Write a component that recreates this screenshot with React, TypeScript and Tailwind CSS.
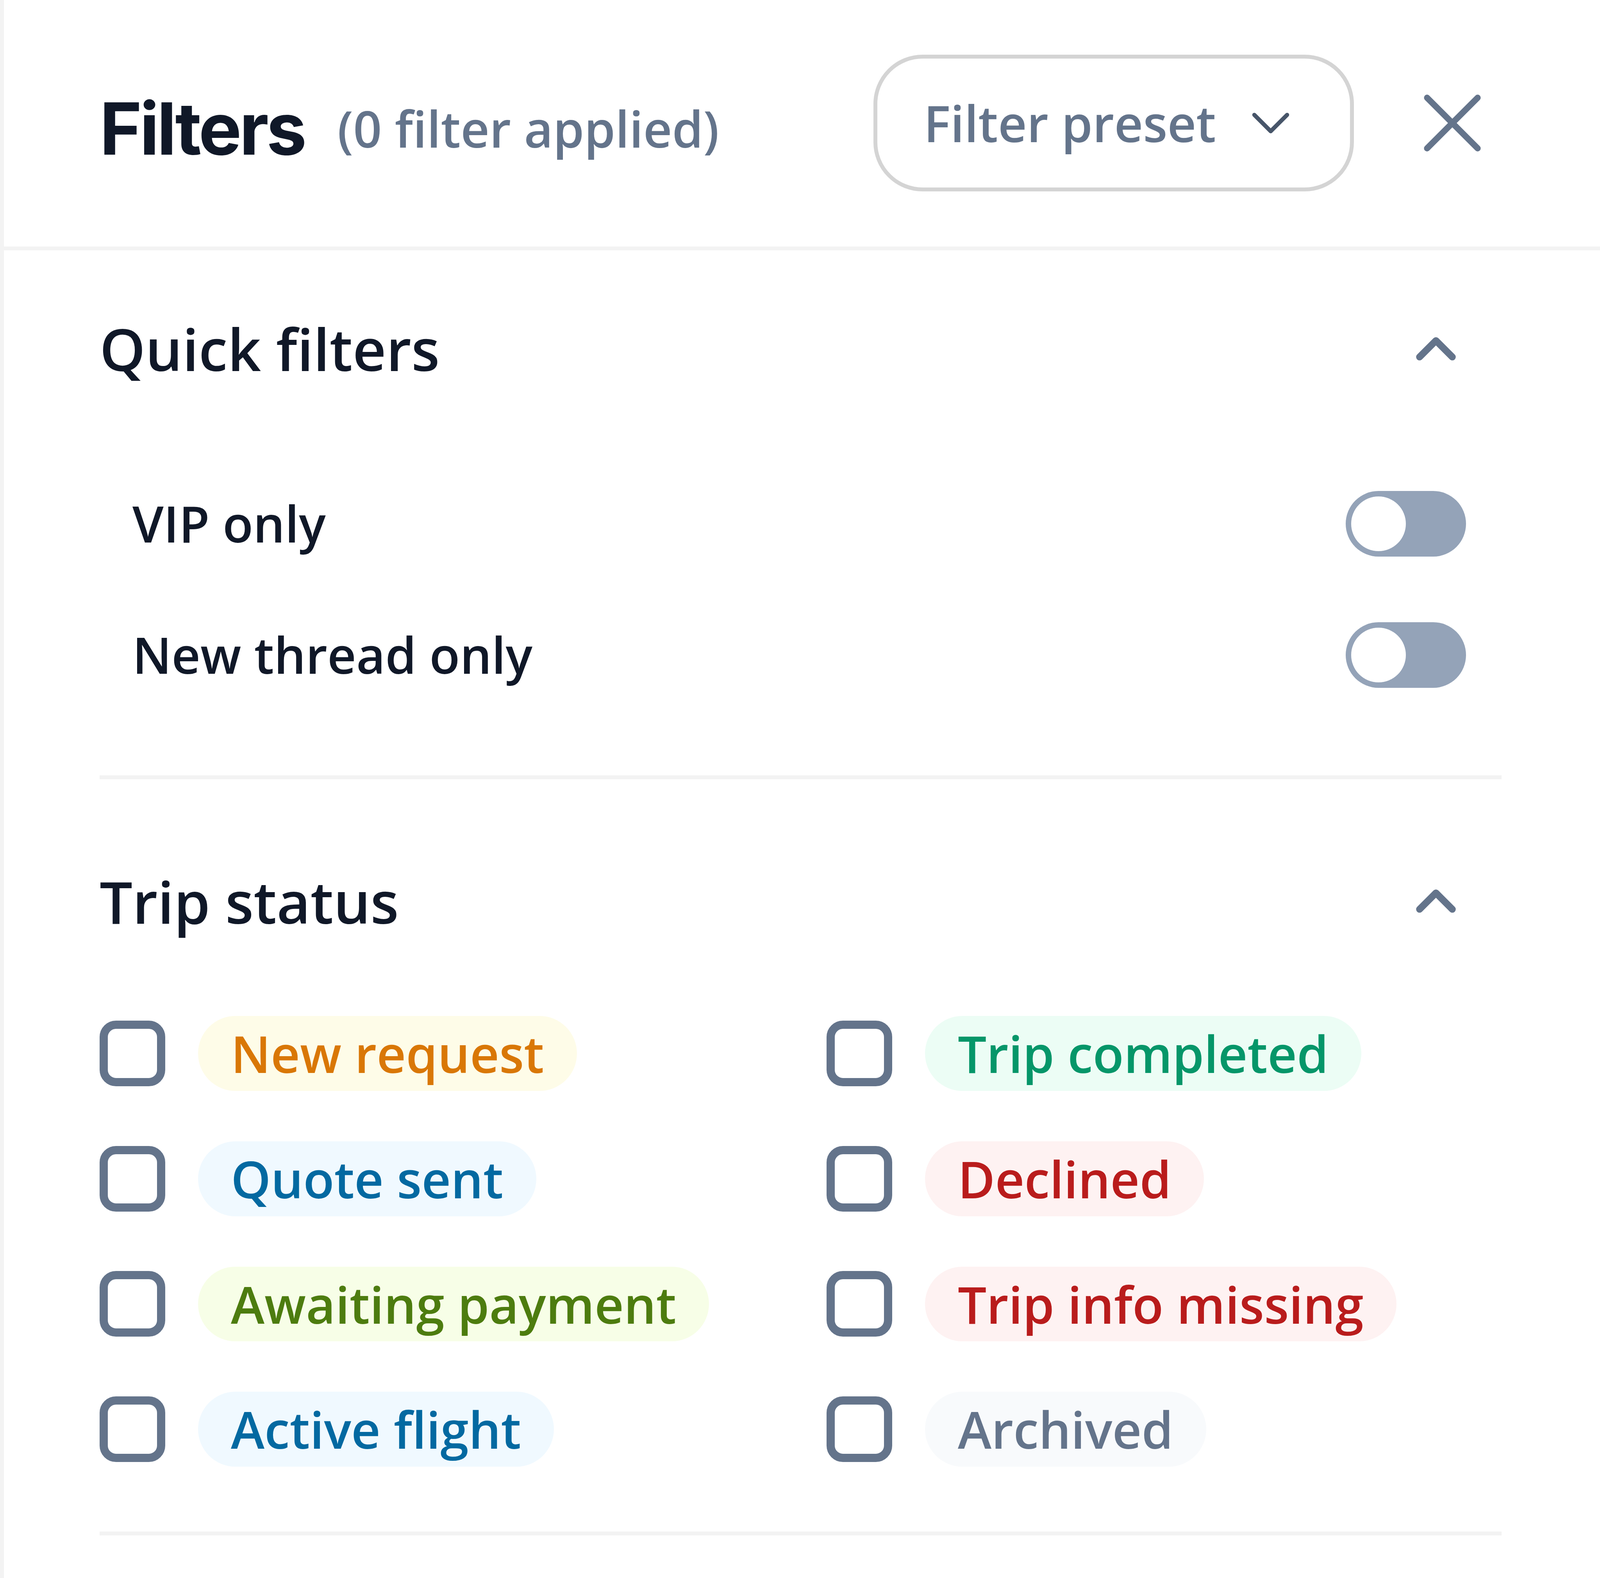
import { ChevronDown, ChevronUp } from "lucide-react";

const statuses = [
  { label: "New request", className: "bg-[#fefce8] text-[#d97706]" },
  { label: "Quote sent", className: "bg-[#f0f9ff] text-[#0369a1]" },
  { label: "Awaiting payment", className: "bg-[#f7fee7] text-[#4d7c0f]" },
  { label: "Active flight", className: "bg-[#f0f9ff] text-[#0369a1]" },
  { label: "Trip completed", className: "bg-[#ecfdf5] text-[#059669]" },
  { label: "Declined", className: "bg-[#fef2f2] text-[#b91c1c]" },
  { label: "Trip info missing", className: "bg-[#fef2f2] text-[#b91c1c]" },
  { label: "Archived", className: "bg-[#f8fafc] text-[#64748b]" },
];

const quickFilters = ["VIP only", "New thread only"];

const Toggle = () => (
  <button className="flex h-6 w-11 items-center rounded-full bg-[#94a3b8] p-0.5">
    <span className="h-5 w-5 rounded-full bg-white" />
  </button>
);

const SectionHeader = ({ title }: { title: string }) => (
  <div className="flex h-12 items-center justify-between">
    <h3 className="text-[21.3px] font-semibold text-[#101828]">{title}</h3>
    <button className="p-3 text-[#64748b]">
      <ChevronUp size={24} strokeWidth={2.5} />
    </button>
  </div>
);

const App = () => {
  return (
    <div className="[zoom:7] border-l-[1.5px] border-[#f3f3f3] bg-white pb-4 font-['Open_Sans',sans-serif]">
      <header className="flex h-[91.5px] items-center justify-between border-b-[1.5px] border-[#f3f3f3] pl-[35px] pr-[42px]">
        <div className="flex items-center gap-3 pt-1">
          <h2 className="font-['Inter',sans-serif] text-[26.4px] font-bold tracking-[-0.032em] text-[#101828]">
            Filters
          </h2>
          <span className="text-[18.3px] font-semibold text-[#64748b]">
            (0 filter applied)
          </span>
        </div>
        <div className="flex items-center gap-6">
          <button className="flex h-[50px] items-center gap-2 rounded-[18px] border-[1.5px] border-[#d4d4d4] px-[17px] text-[18.3px] font-semibold text-[#64748b]">
            Filter preset
            <ChevronDown size={24} strokeWidth={1.5} className="text-[#475569]" />
          </button>
          <button className="text-[#64748b]">
            <svg
              width="24"
              height="24"
              viewBox="0 0 24 24"
              fill="none"
              stroke="currentColor"
              strokeWidth="2.25"
              strokeLinecap="round"
            >
              <path d="M2.75 2.75 21.25 21.25M21.25 2.75 2.75 21.25" />
            </svg>
          </button>
        </div>
      </header>

      <div className="pl-[35px] pr-[36px]">
        <section className="border-b-[1.5px] border-[#f3f3f3] pb-8 pt-3">
          <SectionHeader title="Quick filters" />
          <div className="mt-7 flex flex-col gap-6 pl-3 pr-[13px]">
            {quickFilters.map((label) => (
              <div key={label} className="flex h-6 items-center justify-between">
                <span className="text-[18.3px] font-semibold text-[#101828]">{label}</span>
                <Toggle />
              </div>
            ))}
          </div>
        </section>

        <section className="border-b-[1.5px] border-[#f3f3f3] pb-[23.7px] pt-[20.7px]">
          <SectionHeader title="Trip status" />
          <div className="mt-[18px] grid grid-flow-col grid-cols-2 grid-rows-4 gap-x-[19px] gap-y-[18.4px]">
            {statuses.map((status) => (
              <label key={status.label} className="flex items-center gap-3">
                <span className="h-6 w-6 shrink-0 rounded-[6px] border-[3px] border-[#64748b]" />
                <span
                  className={`rounded-full px-3 text-[18.6px] font-semibold leading-[27.4px] ${status.className}`}
                >
                  {status.label}
                </span>
              </label>
            ))}
          </div>
        </section>
      </div>
    </div>
  );
};

export default App;
